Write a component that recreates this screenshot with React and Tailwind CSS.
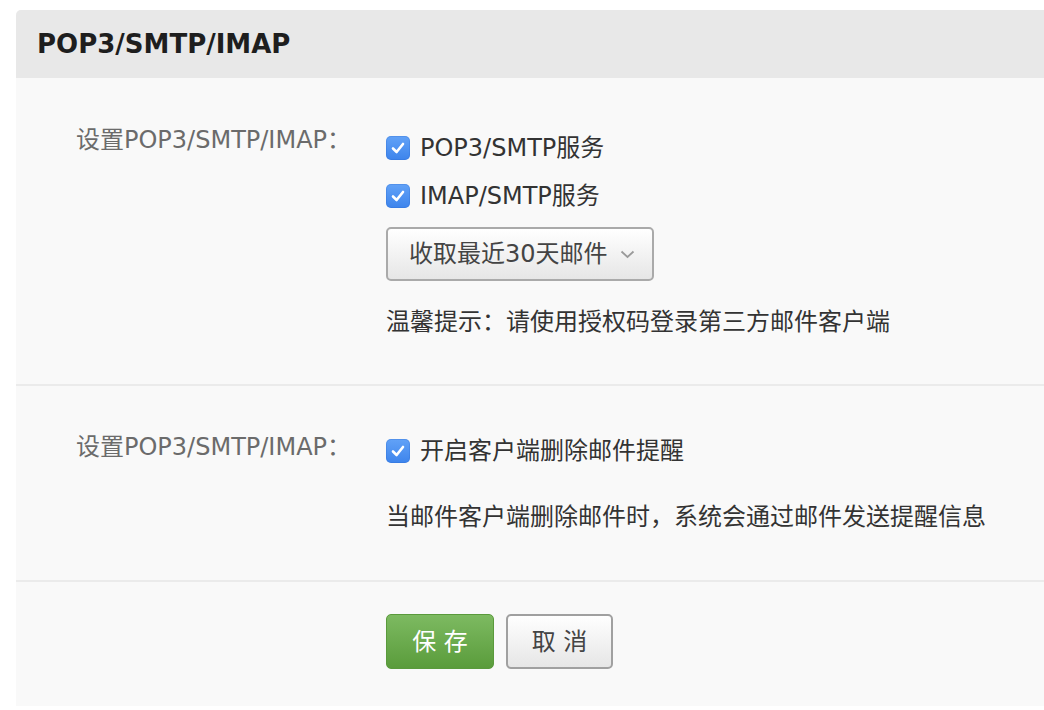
import React from "react";

const font = { fontFamily: '"DejaVu Sans", "Noto Sans CJK SC", sans-serif' };

function Check({ label }) {
  return (
    <label className="flex h-[32px] items-center gap-[10px] text-[24px] text-[#333]">
      <span className="flex h-[24px] w-[24px] items-center justify-center rounded-[5px] bg-gradient-to-b from-[#62a2f7] to-[#3d84ec] shadow-[inset_0_0_0_1px_rgba(40,100,200,0.25)]">
        <svg width="18" height="18" viewBox="0 0 18 18" fill="none">
          <path d="M4 9.5 L7.6 13 L14 5" stroke="white" strokeWidth="2.6" strokeLinecap="round" strokeLinejoin="round" />
        </svg>
      </span>
      <span>{label}</span>
    </label>
  );
}

function Label({ off }) {
  return (
    <div className={`w-[370px] shrink-0 whitespace-nowrap pl-[60px] text-[24px] leading-[32px] text-[#6b6b6b] ${off}`}>
      设置POP3/SMTP/IMAP：
    </div>
  );
}

export default function App() {
  return (
    <div className="min-h-[710px] bg-white pt-[10px] pl-[16px]" style={font}>
      <div className="overflow-hidden rounded-tl-[5px] bg-[#f9f9f9]">
        <div className="flex h-[68px] items-center bg-[#e8e8e8] pl-[21px] text-[26px] font-bold text-[#1e1e1e]">
          POP3/SMTP/IMAP
        </div>

        <div className="flex pt-[54px] pb-[46px] border-b-2 border-[#ebebeb]">
          <Label off="-mt-[8px]" />
          <div className="flex flex-col">
            <Check label="POP3/SMTP服务" />
            <div className="mt-[16px]">
              <Check label="IMAP/SMTP服务" />
            </div>
            <button className="mt-[15px] flex h-[54px] w-[268px] items-center rounded-[5px] border-2 border-[#aaaaaa] bg-gradient-to-b from-[#ffffff] to-[#e6e6e6] pl-[21px] text-[24px] text-[#444]">
              <span>收取最近30天邮件</span>
              <svg className="ml-[12px]" width="15" height="9" viewBox="0 0 15 9" fill="none">
                <path d="M1.5 1.5 L7.5 7 L13.5 1.5" stroke="#9a9a9a" strokeWidth="1.8" />
              </svg>
            </button>
            <div className="mt-[25px] h-[32px] text-[24px] leading-[32px] text-[#333]">
              温馨提示：请使用授权码登录第三方邮件客户端
            </div>
          </div>
        </div>

        <div className="flex pt-[49px] pb-[47px] border-b-2 border-[#ebebeb]">
          <Label off="-mt-[4px]" />
          <div className="flex flex-col">
            <Check label="开启客户端删除邮件提醒" />
            <div className="mt-[34px] h-[32px] text-[24px] leading-[32px] text-[#333]">
              当邮件客户端删除邮件时，系统会通过邮件发送提醒信息
            </div>
          </div>
        </div>

        <div className="flex gap-[12px] pl-[370px] pt-[32px] pb-[37px]">
          <button className="h-[55px] w-[108px] rounded-[5px] border border-[#5a9a3c] bg-gradient-to-b from-[#7dba61] to-[#5a9c3b] text-[24px] text-white">
            保 存
          </button>
          <button className="h-[55px] w-[107px] rounded-[5px] border-2 border-[#a0a0a0] bg-gradient-to-b from-[#ffffff] to-[#e6e6e6] text-[24px] text-[#444]">
            取 消
          </button>
        </div>
      </div>
    </div>
  );
}
